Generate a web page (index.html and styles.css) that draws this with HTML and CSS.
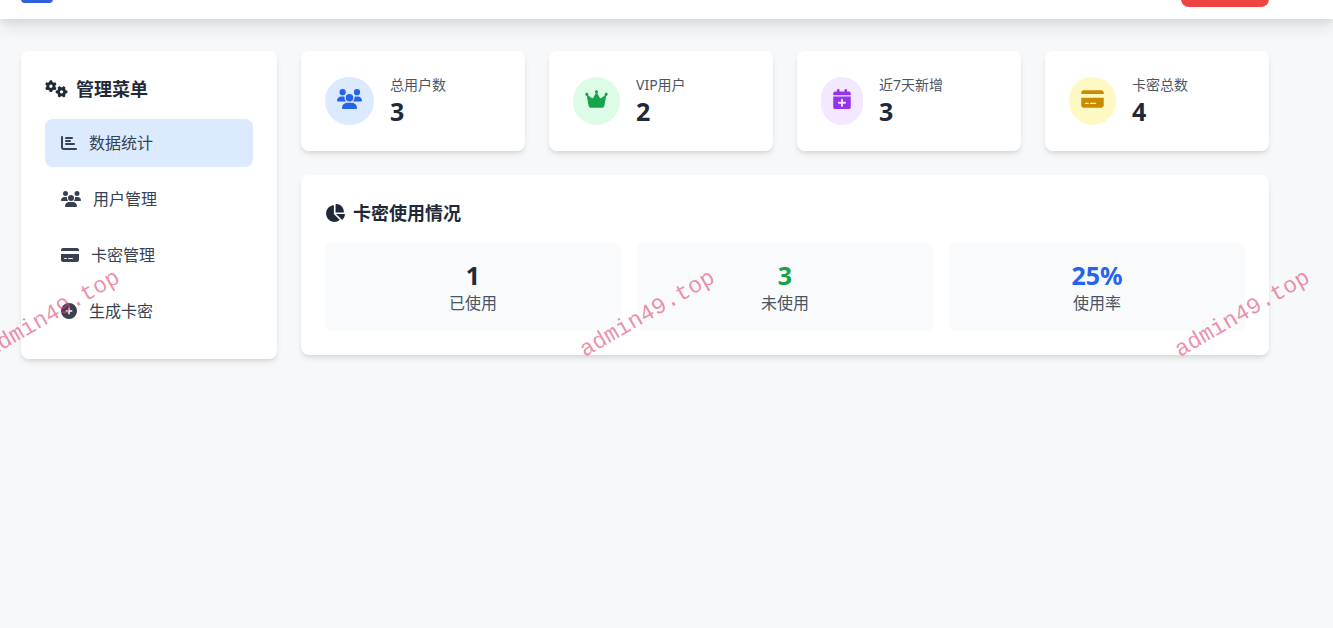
FILE: index.html
```html
<!DOCTYPE html>
<html lang="zh-CN">
<head>
  <meta charset="UTF-8" />
  <meta name="viewport" content="width=device-width, initial-scale=1.0" />
  <title>管理后台</title>
  <link rel="stylesheet" href="styles.css">
</head>
<body>
  <!-- shared icons -->
  <svg class="icon-defs" aria-hidden="true">
    <symbol id="icon-users" viewBox="0 0 640 512">
      <path d="M144 0a80 80 0 1 1 0 160A80 80 0 1 1 144 0zM512 0a80 80 0 1 1 0 160A80 80 0 1 1 512 0zM0 298.7C0 239.8 47.8 192 106.7 192h42.7c15.9 0 31 3.5 44.6 9.7c-1.3 7.2-1.9 14.7-1.9 22.3c0 38.2 16.8 72.5 43.3 96H21.3C9.6 320 0 310.4 0 298.7zM405.3 320c26.6-23.5 43.3-57.8 43.3-96c0-7.6-.7-15-1.9-22.3c13.6-6.3 28.7-9.7 44.6-9.7h42.7C592.2 192 640 239.8 640 298.7c0 11.8-9.6 21.3-21.3 21.3H405.3zM224 224a96 96 0 1 1 192 0 96 96 0 1 1 -192 0zM128 485.3C128 411.7 187.7 352 261.3 352H378.7C452.3 352 512 411.7 512 485.3c0 14.7-11.9 26.7-26.7 26.7H154.7c-14.7 0-26.7-11.9-26.7-26.7z"/>
    </symbol>
    <symbol id="icon-card" viewBox="0 0 576 512">
      <path d="M64 32C28.7 32 0 60.7 0 96v32H576V96c0-35.3-28.7-64-64-64H64zM576 224H0V416c0 35.3 28.7 64 64 64H512c35.3 0 64-28.7 64-64V224zM112 352h64c8.8 0 16 7.2 16 16s-7.2 16-16 16H112c-8.8 0-16-7.2-16-16s7.2-16 16-16zm112 16c0-8.8 7.2-16 16-16H368c8.8 0 16 7.2 16 16s-7.2 16-16 16H240c-8.8 0-16-7.2-16-16z"/>
    </symbol>
    <symbol id="icon-gears" viewBox="0 0 640 512">
      <path id="gear" d="M308.5 135.3c7.1-6.3 9.9-16.2 6.2-25c-2.3-5.3-4.8-10.5-7.6-15.5L304 89.4c-3-5-6.3-9.9-9.8-14.6c-5.7-7.6-15.7-10.1-24.7-7.1l-28.2 9.3c-10.7-8.8-23-16-36.2-20.9L199 27.1c-1.9-9.3-9.1-16.7-18.5-17.8C173.9 8.4 167.2 8 160.4 8h-.7c-6.8 0-13.5 .4-20.1 1.2c-9.4 1.1-16.6 8.6-18.5 17.8L115 56.1c-13.3 5-25.5 12.1-36.2 20.9L50.5 67.8c-9-3-19-.5-24.7 7.1c-3.5 4.7-6.8 9.6-9.9 14.6l-3 5.3c-2.8 5-5.3 10.2-7.6 15.6c-3.7 8.7-.9 18.6 6.2 25l22.2 19.8C32.6 161.9 32 168.9 32 176s.6 14.1 1.7 20.9L11.5 216.7c-7.1 6.3-9.9 16.2-6.2 25c2.3 5.3 4.8 10.5 7.6 15.6l3 5.2c3 5.1 6.3 9.9 9.9 14.6c5.7 7.6 15.7 10.1 24.7 7.1l28.2-9.3c10.7 8.8 23 16 36.2 20.9l6.1 29.1c1.9 9.3 9.1 16.7 18.5 17.8c6.7 .8 13.5 1.2 20.4 1.2s13.7-.4 20.4-1.2c9.4-1.1 16.6-8.6 18.5-17.8l6.1-29.1c13.3-5 25.5-12.1 36.2-20.9l28.2 9.3c9 3 19 .5 24.7-7.1c3.5-4.7 6.8-9.5 9.8-14.6l3.1-5.4c2.8-5 5.3-10.2 7.6-15.5c3.7-8.7 .9-18.6-6.2-25l-22.2-19.8c1.1-6.8 1.7-13.8 1.7-20.9s-.6-14.1-1.7-20.9l22.2-19.8zM112 176a48 48 0 1 1 96 0 48 48 0 1 1 -96 0z"/>
      <use href="#gear" transform="translate(464 336) rotate(90) translate(-160 -176)"/>
    </symbol>
  </svg>

  <header class="topbar">
    <div class="logo"></div>
    <button type="button" class="logout" aria-label="退出"></button>
  </header>

  <div class="layout">
    <nav class="card sidebar">
      <h2 class="title">
        <svg class="icon" width="23" height="18"><use href="#icon-gears"/></svg>
        管理菜单
      </h2>
      <div class="menu">
        <a href="#stats" class="menu-item active">
          <svg class="icon" width="16" height="16" viewBox="0 0 512 512"><path d="M32 32c17.7 0 32 14.3 32 32V400c0 8.8 7.2 16 16 16H480c17.7 0 32 14.3 32 32s-14.3 32-32 32H80c-44.2 0-80-35.8-80-80V64C0 46.3 14.3 32 32 32zM160 64H352a32 32 0 0 1 0 64H160a32 32 0 0 1 0-64zM160 160H288a32 32 0 0 1 0 64H160a32 32 0 0 1 0-64zM160 256H416a32 32 0 0 1 0 64H160a32 32 0 0 1 0-64z"/></svg>
          数据统计
        </a>
        <a href="#users" class="menu-item">
          <svg class="icon" width="20" height="16"><use href="#icon-users"/></svg>
          用户管理
        </a>
        <a href="#cards" class="menu-item">
          <svg class="icon" width="18" height="16"><use href="#icon-card"/></svg>
          卡密管理
        </a>
        <a href="#generate" class="menu-item">
          <svg class="icon" width="16" height="16" viewBox="0 0 512 512"><path fill-rule="evenodd" d="M256 0a256 256 0 1 1 0 512A256 256 0 1 1 256 0zM232 344V280H168a24 24 0 0 1 0-48h64V168a24 24 0 0 1 48 0v64h64a24 24 0 0 1 0 48H280v64a24 24 0 0 1-48 0z"/></svg>
          生成卡密
        </a>
      </div>
    </nav>

    <main class="content">
      <section class="stats">
        <div class="card stat">
          <div class="stat-icon blue"><svg class="icon" width="25" height="20"><use href="#icon-users"/></svg></div>
          <div>
            <p class="stat-label">总用户数</p>
            <p class="number">3</p>
          </div>
        </div>
        <div class="card stat">
          <div class="stat-icon green">
            <svg class="icon" width="23" height="20" viewBox="0 0 576 512"><path d="M309 106c11.4-7 19-19.7 19-34c0-22.1-17.9-40-40-40s-40 17.9-40 40c0 14.4 7.6 27 19 34L209.7 220.6c-9.1 18.2-32.7 23.4-48.6 10.7L72 160c5-6.7 8-15 8-24c0-22.1-17.9-40-40-40S0 113.9 0 136s17.9 40 40 40c.2 0 .5 0 .7 0L86.4 427.4c5.5 30.4 32 52.6 63 52.6H426.6c30.9 0 57.4-22.1 63-52.6L535.3 176c.2 0 .5 0 .7 0c22.1 0 40-17.9 40-40s-17.9-40-40-40s-40 17.9-40 40c0 9 3 17.3 8 24l-89.1 71.3c-15.9 12.7-39.5 7.5-48.6-10.7L309 106z"/></svg>
          </div>
          <div>
            <p class="stat-label">VIP用户</p>
            <p class="number">2</p>
          </div>
        </div>
        <div class="card stat">
          <div class="stat-icon purple">
            <svg class="icon" width="18" height="20" viewBox="0 0 448 512"><path d="M96 32V64H48C21.5 64 0 85.5 0 112v48H448V112c0-26.5-21.5-48-48-48H352V32c0-17.7-14.3-32-32-32s-32 14.3-32 32V64H160V32c0-17.7-14.3-32-32-32S96 14.3 96 32zM448 192H0V464c0 26.5 21.5 48 48 48H400c26.5 0 48-21.5 48-48V192zM224 248c13.3 0 24 10.7 24 24v56h56c13.3 0 24 10.7 24 24s-10.7 24-24 24H248v56c0 13.3-10.7 24-24 24s-24-10.7-24-24V376H144c-13.3 0-24-10.7-24-24s10.7-24 24-24h56V272c0-13.3 10.7-24 24-24z"/></svg>
          </div>
          <div>
            <p class="stat-label">近7天新增</p>
            <p class="number">3</p>
          </div>
        </div>
        <div class="card stat">
          <div class="stat-icon yellow"><svg class="icon" width="23" height="20"><use href="#icon-card"/></svg></div>
          <div>
            <p class="stat-label">卡密总数</p>
            <p class="number">4</p>
          </div>
        </div>
      </section>

      <section class="card">
        <h2 class="title">
          <svg class="icon" width="20" height="18" viewBox="0 0 576 512"><path d="M304 240V16.6c0-9 7-16.6 16-16.6C443.7 0 544 100.3 544 224c0 9-7.6 16-16.6 16H304zM32 272C32 150.7 122.1 50.3 239 34.3c9.2-1.3 17 6.1 17 15.4V288L412.5 444.5c6.7 6.7 6.2 17.7-1.5 23.1C371.8 495.6 323.8 512 272 512C139.5 512 32 404.6 32 272zm526.4 16c9.3 0 16.6 7.8 15.4 17c-7.7 55.9-34.6 105.6-73.9 142.3c-6 5.6-15.4 5.2-21.2-.7L320 288H558.4z"/></svg>
          卡密使用情况
        </h2>
        <div class="usage">
          <div class="usage-item">
            <p class="number">1</p>
            <p class="usage-label">已使用</p>
          </div>
          <div class="usage-item">
            <p class="number text-green">3</p>
            <p class="usage-label">未使用</p>
          </div>
          <div class="usage-item">
            <p class="number text-blue">25%</p>
            <p class="usage-label">使用率</p>
          </div>
        </div>
      </section>
    </main>
  </div>

  <div class="watermark">
    <span>admin49.top</span>
    <span>admin49.top</span>
    <span>admin49.top</span>
  </div>
</body>
</html>
```
FILE: styles.css
```css
* {
  box-sizing: border-box;
}
body {
  margin: 0;
  min-height: 100vh;
  display: flow-root;
  position: relative;
  background: #f7f8fa;
  color: #1f2937;
  font-family: "Noto Sans", "Noto Sans CJK SC", sans-serif;
  font-size: 16px;
  line-height: 24px;
}
h2, p {
  margin: 0;
}
.icon-defs {
  display: none;
}
.icon {
  display: block;
  flex-shrink: 0;
  fill: currentColor;
}
.topbar {
  height: 64px;
  margin-top: -45px;
  padding: 0 64px 0 21px;
  display: flex;
  align-items: center;
  justify-content: space-between;
  background: #fff;
  box-shadow: 0 10px 15px 0 rgba(0,0,0,0.08), 0 4px 6px 0 rgba(0,0,0,0.06);
}
.logo {
  width: 32px;
  height: 32px;
  border-radius: 4px;
  background: #2f5fdc;
}
.logout {
  width: 88px;
  height: 40px;
  border: none;
  border-radius: 8px;
  background: #ef4444;
  cursor: pointer;
}
.layout {
  display: grid;
  grid-template-columns: 256px minmax(0, 1fr);
  align-items: start;
  gap: 24px;
  padding: 32px 64px 32px 21px;
}
.content {
  display: grid;
  gap: 24px;
}
.card {
  padding: 24px;
  background: #fff;
  border-radius: 8px;
  box-shadow: 0 4px 6px -1px rgba(0,0,0,0.1), 0 2px 4px -1px rgba(0,0,0,0.06);
}
.title {
  display: flex;
  align-items: center;
  gap: 8px;
  margin-bottom: 16px;
  font-size: 18px;
  line-height: 28px;
  font-weight: bold;
}
.menu {
  display: grid;
  gap: 8px;
}
.menu-item {
  display: flex;
  align-items: center;
  gap: 12px;
  padding: 12px 16px;
  border-radius: 8px;
  color: #374151;
  text-decoration: none;
}
.menu-item.active {
  background: #dbeafe;
}
.stats {
  display: grid;
  grid-template-columns: repeat(4, 1fr);
  gap: 24px;
}
.stat {
  display: flex;
  align-items: center;
  gap: 16px;
}
.stat-icon {
  padding: 12px 12px 16px;
  border-radius: 999px;
}
.blue {
  background: #dbeafe;
  color: #2563eb;
}
.green {
  background: #dcfce7;
  color: #16a34a;
}
.purple {
  background: #f3e8ff;
  color: #9333ea;
}
.yellow {
  background: #fef9c3;
  color: #ca8a04;
}
.stat-label {
  font-size: 14px;
  line-height: 20px;
  color: #4b5563;
}
.number {
  font-size: 25px;
  line-height: 32px;
  font-weight: bold;
}
.usage {
  display: grid;
  grid-template-columns: repeat(3, 1fr);
  gap: 16px;
}
.usage-item {
  padding: 16px;
  border-radius: 8px;
  background: #f9fafb;
  text-align: center;
}
.usage-label {
  color: #4b5563;
}
.text-green {
  color: #16a34a;
}
.text-blue {
  color: #2563eb;
}
/* diagonal site name repeated across the page */
.watermark {
  position: absolute;
  inset: 0;
  display: flex;
  justify-content: center;
  padding: 302px 38px 0 0;
  overflow: hidden;
  pointer-events: none;
}
.watermark span {
  flex: 0 0 595px;
  height: 24px;
  text-align: center;
  font-family: "Liberation Mono", monospace;
  font-size: 23px;
  color: rgba(225,70,115,0.6);
  transform: rotate(-30deg);
}

@media (max-width: 900px) {
  .layout {
    grid-template-columns: 1fr;
  }
  .stats {
    grid-template-columns: repeat(2, 1fr);
  }
}
```
